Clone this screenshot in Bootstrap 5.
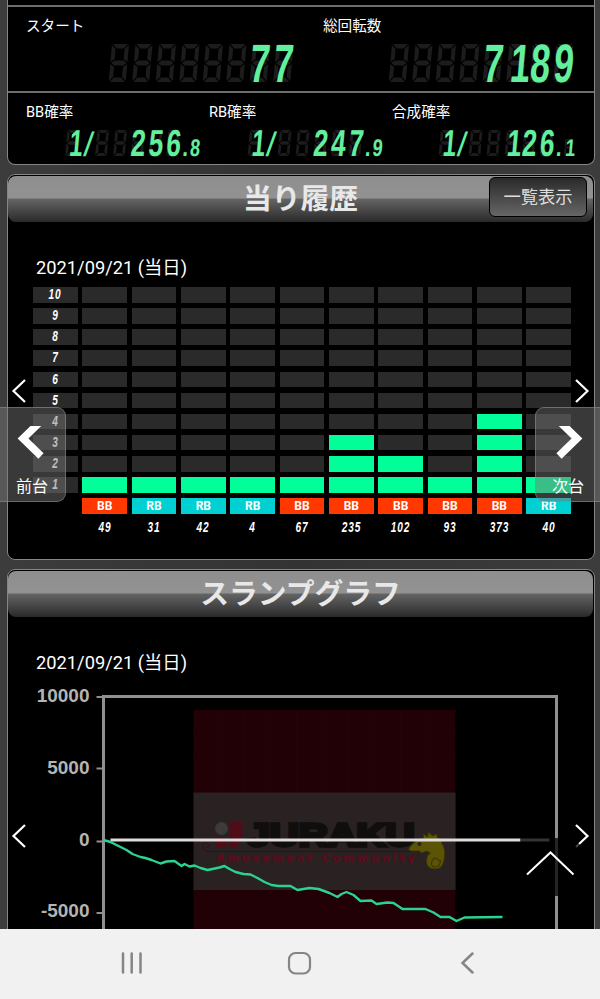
<!DOCTYPE html>
<html lang="ja">
<head>
<meta charset="utf-8">
<meta name="viewport" content="width=device-width, initial-scale=1">
<title>当り履歴</title>
<link href="https://cdn.jsdelivr.net/npm/bootstrap@5.3.0/dist/css/bootstrap.min.css" rel="stylesheet">
<style>
body{background:#393939;color:#fff;font-family:Roboto,"Noto Sans CJK JP",sans-serif}
.phone{width:600px;height:999px}
.screen{height:929px;padding:0 5px 0 7px;background:linear-gradient(90deg,#3c3c3c,#333 50%,#3c3c3c)}
.panel{border:1.5px solid #858585;border-radius:8px;background:#000}
.panel-data{height:165px;border-top:0;border-radius:0 0 8px 8px;padding-top:5px}
.panel-hits{height:386px;margin-top:9px}
.panel-slump{height:380px;margin-top:9px}
.stat-row{border-top:2.5px solid #6e6e6e;font-size:14.6px;line-height:18px}
.row-total{height:86px;padding-top:10px}
.row-rate{padding-top:10px}
.stat-row svg{display:block;overflow:visible}
.row-total svg{margin-top:-1px}
.row-rate svg{margin-top:-1px}
.lbl-a{padding-left:18px}
.lbl-total{width:297px}
.lbl-rate{width:183px}
.title-bar{height:46px;margin:1px 1px 0 0;border-radius:8px;background:linear-gradient(#8e8e8e,#929292 48%,#646464 50%,#2a2a2a)}
.title-bar h1{font:700 28.8px/42px "Noto Sans CJK JP",sans-serif;color:#e8e8e8}
.btn-list{right:6px;top:1px;width:98px;height:40px;padding:0;font-size:17.3px;line-height:38px;color:#ddd;border:1.5px solid #000;border-radius:6px;background:linear-gradient(#2a2a2a,#666)}
.date{font-size:18.3px;line-height:24px;padding-left:28px;margin-top:34px}
.hits{width:538px;margin:7px 0 0 25px;grid-template-columns:repeat(11,1fr);grid-auto-rows:15.5px;gap:5.65px 4.7px}
.cell{background:#2a2a2a}
.cell.on{background:#00ff98}
.num{font:italic 700 14px/14px "Liberation Sans",sans-serif}
.num span{display:inline-block;transform:scaleX(.72);letter-spacing:1.2px}
.kind{font:700 12px/16px Roboto,sans-serif}
.bb{background:#ff3800}.rb{background:#00d0d2}
.side{top:407px;width:66px;height:95px;background:rgba(120,120,120,.48);border:1px solid rgba(150,150,150,.5);font-size:16px;line-height:22px;padding-top:18px}
.side-l{left:0;border-left:0;border-radius:0 9px 9px 0}
.side-r{right:0;border-right:0;border-radius:9px 0 0 9px;width:65px}
.side svg{display:block}
.arrow{width:16px;height:26px}
.nav-keys{height:70px;background:#f1f1f1}
</style>
<script src="https://cdn.jsdelivr.net/npm/bootstrap@5.3.0/dist/js/bootstrap.bundle.min.js"></script>
</head>
<body>
<svg width="0" height="0" class="position-absolute">
<defs><symbol id="unlit" viewBox="0 0 20 38" overflow="visible"><g transform="translate(3.5 0) skewX(-5)" fill="#1c1c1c">
<path d="M1 0H16L12 4.500H5zM0 1L4 5V15L0 18zM17 1L13 5V15L17 18zM1 19L4 16.500H13L16 19L13 21.500H4zM0 20L4 23V33L0 37zM17 20L13 23V33L17 37zM1 38L5 33.500H12L16 38z"/></g></symbol></defs>
</svg>
<div class="phone position-relative overflow-hidden">
<main class="screen overflow-hidden">
<section class="panel panel-data">
 <div class="stat-row row-total">
  <div class="d-flex lbl-a"><div class="lbl-total">スタート</div><div>総回転数</div></div>
  <svg width="586" height="50" viewBox="8 34 586 50" id="totals"></svg>
 </div>
 <div class="stat-row row-rate">
  <div class="d-flex lbl-a"><div class="lbl-rate">BB確率</div><div class="lbl-rate">RB確率</div><div>合成確率</div></div>
  <svg width="586" height="42" viewBox="8 120 586 42" id="rates"></svg>
 </div>
</section>

<section class="panel panel-hits">
 <div class="title-bar position-relative text-center"><h1 class="m-0">当り履歴</h1><button class="btn btn-list position-absolute">一覧表示</button></div>
 <div class="date">2021/09/21 (当日)</div>
 <div class="d-grid hits" id="hits"></div>
</section>

<section class="panel panel-slump">
 <div class="title-bar text-center"><h1 class="m-0">スランプグラフ</h1></div>
 <div class="date">2021/09/21 (当日)</div>
 <svg class="d-block" width="585" height="260" viewBox="8.5 675 585 260">
  <path fill="#210106" d="M194 710h262v225H194z"/>
  <path d="M194 734h262M194 759h262M219 710v82M245 710v82M271 710v82M297 710v82M323 710v82M349 710v82M375 710v82M401 710v82M427 710v82" stroke="#250207" fill="none"/>
  <path fill="#292122" d="M194 792.500h262v97.500H194z"/>
  <circle cx="222" cy="828.500" r="6.500" fill="#3e3a3a"/>
  <path fill="#4f0d18" d="M230 822h13v14l-6 12h-7zM216 837h11v11h-11z"/>
  <path d="M442 851.500H209q-6-1-6-5 1-5 5-3 3 3-1 4" stroke="#3d0a12" fill="none"/>
  <text x="248" y="846" font-family="Liberation Sans" font-weight="700" font-size="32" textLength="167" lengthAdjust="spacingAndGlyphs" fill="#100d0d" stroke="#100d0d" stroke-width="3.500">JURAKU</text>
  <text x="217" y="861.500" font-family="DejaVu Sans" font-weight="700" font-size="10.500" textLength="198" fill="#5c0d1a" stroke="#5c0d1a" stroke-width=".5">Amusement Community</text>
  <path fill="#5c5405" stroke="#3b3603" d="M409 849q6-9 15-11l0-4 4 3 1-5 4 4 4-2 1 4 5 1-1 4q4 5 3 14-1 12-9 12-9 0-9-8 0-6 4-8l-4-2-5 2-2-2-9 0z"/>
  <circle cx="420" cy="844" r="2" fill="#292122"/>
  <path fill="none" stroke="#3b3603" stroke-width="1.200" d="M440 861q-4-5-7-1-3 6 2 7 6 0 6-7"/>
  <g fill="none" stroke="#909090" stroke-width="3"><path d="M104 935V696.500H557V838M557 896V935"/><path stroke-width="2" d="M97 697h6M97 768.500h6M97 841.500h6M97 913h6"/></g>
  <path d="M557 838V896" stroke="#242424" stroke-width="3"/>
  <path d="M111 840H521" stroke="#e0dcdc" stroke-width="3"/><path d="M521 840H550" stroke="#353333" stroke-width="3"/>
  <polyline fill="none" stroke="#2bd38f" stroke-width="2.400" stroke-linejoin="round" points="104,840 111,842 119,846 127,850 133,854 141,857 146,858 152,860 161,863.500 167,861.500 175,861 182,866 185,864 190,866.500 195,865.500 201,868 208,870 213,869 220,867.500 225,866 230,869 236,872 244,874 251,874.500 258,878 265,882 272,885 279,886 291,886 298,890 310,888 319,889 330,893 338,897 342,894 347,892 354,895 361,901 372,900.500 377,904 388,902.500 394,903 403,909 426,909 434,912.500 441,917 450,917 457,921 465,917.500 503,917"/>
  <g font-family="Liberation Sans" font-weight="700" font-size="19" fill="#b4b4b4" text-anchor="end"><text x="90" y="701.500">10000</text><text x="90" y="773.500">5000</text><text x="90" y="845.500">0</text><text x="90" y="917">-5000</text></g>
 </svg>
</section>
</main>
<svg class="arrow position-absolute" style="left:11px;top:378px"><path d="M14 2L2.500 13L14 24" fill="none" stroke="#fff" stroke-width="2.200"/></svg>
<svg class="arrow position-absolute" style="left:574px;top:378px"><path d="M2 2L13.500 13L2 24" fill="none" stroke="#fff" stroke-width="2.200"/></svg>
<svg class="arrow position-absolute" style="left:11px;top:823px"><path d="M14 2L2.500 13L14 24" fill="none" stroke="#fff" stroke-width="2.200"/></svg>
<svg class="arrow position-absolute" style="left:574px;top:823px"><path d="M2 2L13.500 13L5 21" fill="none" stroke="#fff" stroke-width="2.200"/><path d="M5 21L2 24" stroke="#444" stroke-width="2.200"/></svg>
<svg class="position-absolute" style="left:524px;top:848px" width="54" height="30"><path d="M3 26.500L26.500 4.500L49.500 26.500" fill="none" stroke="#fff" stroke-width="2"/></svg>
<div class="side side-l position-absolute"><svg width="64" height="50" viewBox="0 425 64 50"><path d="M41 420L23 437.500L41 455" fill="none" stroke="#fff" stroke-width="7.500"/></svg><div class="ps-3">前台</div></div>
<div class="side side-r position-absolute"><svg width="64" height="50" viewBox="536 425 64 50"><path d="M559 420L577 437.500L559 455" fill="none" stroke="#fff" stroke-width="7.500"/></svg><div class="ps-3">次台</div></div>
<nav class="nav-keys">
 <svg width="600" height="70" fill="none" stroke="#858585" stroke-width="2.500" stroke-linecap="round"><path d="M123 24.500V43.500M131.700 24.500V43.500M140.500 24.500V43.500M472.500 24.500L462.500 34L472.500 43.500"/><rect x="289" y="24" width="21" height="20.500" rx="6.500" stroke-width="2.200"/></svg>
</nav>
</div>
<script>
// Readout: unlit segments behind, digits set as text on the same pitch
function digits(str,x,base,pitch,size,sx,weight=700){
  const xs=[...str].map((c,i)=>(i*pitch/sx+(c==='1'?size*.1:0)).toFixed(2)).join(' ');
  return `<g transform="translate(${x} ${base}) skewX(-5) scale(${sx} 1)"><text x="${xs}" font-family="Liberation Sans" font-weight="${weight}" font-size="${size}" fill="#62f09d">${str}</text></g>`;
}
const unlit=(x,y,w,h)=>`<use href="#unlit" x="${x}" y="${y}" width="${w}" height="${h}"/>`;
let t='';
for(const x0 of [108.5,388.5]) for(let i=0;i<8;i++) t+=unlit(x0+i*23.5,44,20,38);
t+=digits('77',248.5,81.5,23.5,54,.66)+digits('7189',482,81.5,23.5,54,.66);
document.getElementById('totals').innerHTML=t;
let r='';
[[65,'256','8'],[247.5,'247','9'],[438.5,'126','1']].forEach(([x,n,d])=>{
  for(const o of [0,30,48,66,83.5,101]) r+=unlit(x+o,130,13.7,26);
  r+=unlit(x+125,139,9.5,17);
  r+=digits('1',x+1,156,17,37.5,.64)+digits('/',x+18,155.5,17,34,1,400)+digits(n,x+65,156,17.7,37.5,.7)+digits('.',x+117,156,10,26,.8)+digits(d,x+124.5,156,10,24,.75);
});
document.getElementById('rates').innerHTML=r;

const hits=[['BB',49,1],['RB',31,1],['RB',42,1],['RB',4,1],['BB',67,1],['BB',235,3],['BB',102,2],['BB',93,1],['BB',373,4],['RB',40,1]];
let h='';
for(let n=10;n;n--){
  h+=`<div class="cell num text-center"><span>${n}</span></div>`;
  h+=hits.map(v=>`<div class="cell${v[2]>=n?' on':''}"></div>`).join('');
}
h+='<div></div>'+hits.map(v=>`<div class="kind text-center ${v[0].toLowerCase()}">${v[0]}</div>`).join('');
h+='<div></div>'+hits.map(v=>`<div class="num text-center"><span>${v[1]}</span></div>`).join('');
document.getElementById('hits').innerHTML=h;
</script>
</body>
</html>
